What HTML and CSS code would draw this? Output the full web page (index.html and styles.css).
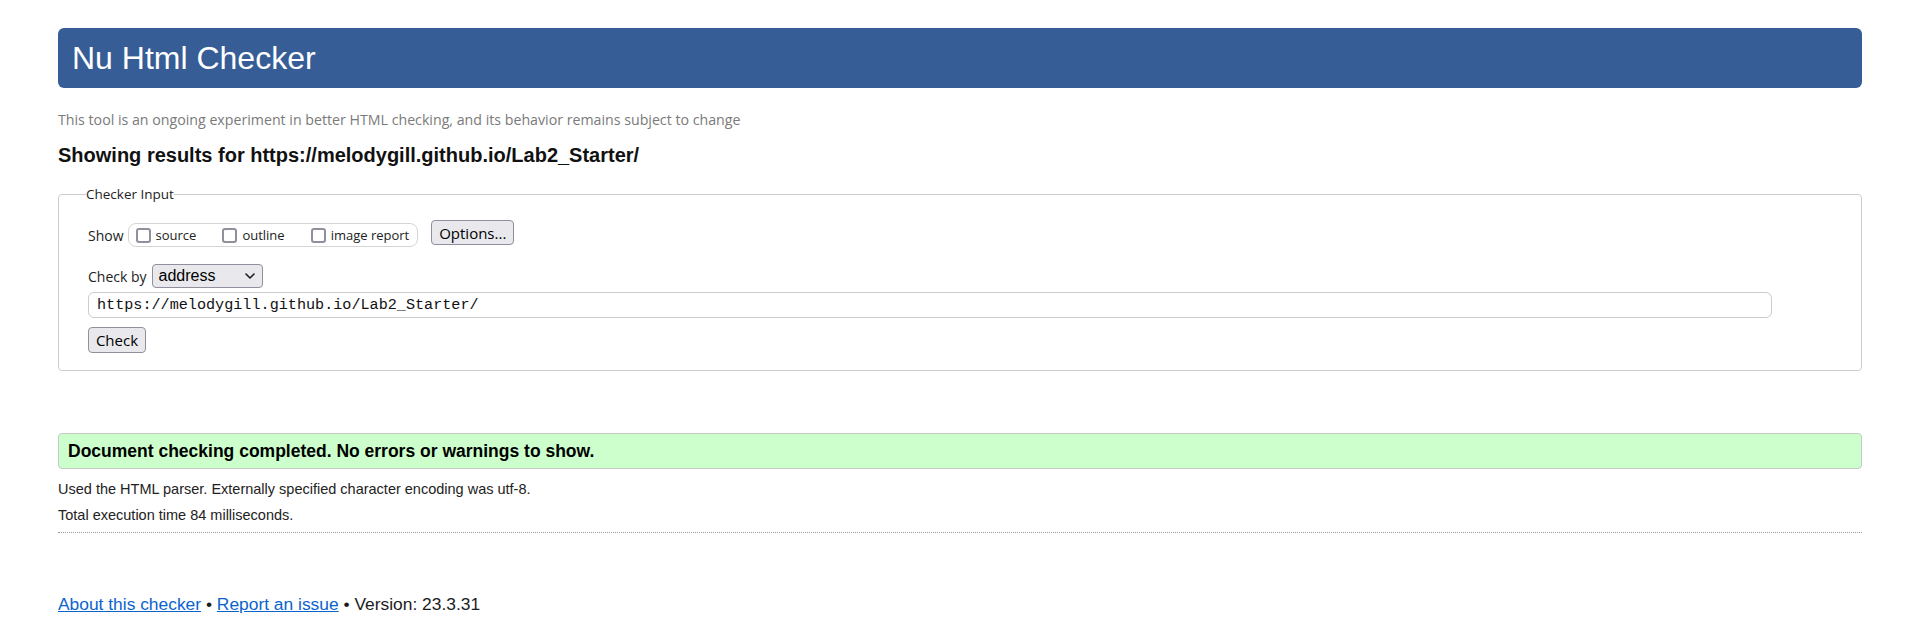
FILE: index.html
```html
<!DOCTYPE html>
<html lang="en">
<head>
<meta charset="utf-8">
<title>Showing results for https://melodygill.github.io/Lab2_Starter/ - Nu Html Checker</title>
<link rel="stylesheet" href="styles.css">
</head>
<body>
<h1 class="banner">Nu Html Checker</h1>
<p class="tagline">This tool is an ongoing experiment in better HTML checking, and its behavior remains subject to change</p>
<h2 class="results-title">Showing results for https://melodygill.github.io/Lab2_Starter/</h2>
<form class="checker-form">
  <fieldset class="checker-input">
    <legend class="checker-legend">Checker Input</legend>
    <div class="show-row">
      <span class="label">Show</span>
      <span class="show-group">
        <label class="opt"><input type="checkbox" class="box"><span>source</span></label>
        <label class="opt"><input type="checkbox" class="box"><span>outline</span></label>
        <label class="opt"><input type="checkbox" class="box"><span>image report</span></label>
      </span>
      <button type="button" class="btn btn-options">Options...</button>
    </div>
    <div class="checkby-row">
      <span class="label">Check by</span>
      <span class="select">
        <span class="select-text">address</span>
        <svg class="chev" width="10" height="6" viewBox="0 0 10 6"><path d="M1 1 L5 5 L9 1" fill="none" stroke="#1c1b22" stroke-width="1.6" stroke-linecap="round" stroke-linejoin="round"/></svg>
      </span>
    </div>
    <div class="url-input">https://melodygill.github.io/Lab2_Starter/</div>
    <div class="check-row"><button type="button" class="btn btn-check">Check</button></div>
  </fieldset>
</form>
<p class="success">Document checking completed. No errors or warnings to show.</p>
<p class="details">Used the HTML parser. Externally specified character encoding was utf-8.</p>
<p class="details details-time">Total execution time 84 milliseconds.</p>
<hr class="sep">
<p class="footer"><a href="#">About this checker</a> • <a href="#">Report an issue</a> • Version: 23.3.31</p>
</body>
</html>
```
FILE: styles.css
```css
html, body {
  margin: 0;
  background: #fff;
}
body {
  padding: 0 58px;
  font-family: "Liberation Sans", Arial, sans-serif;
  color: #1c1c1c;
}
.banner {
  margin: 28px 0 0;
  height: 60px;
  line-height: 60px;
  padding-left: 14px;
  background: #365d95;
  color: #fff;
  font-size: 32px;
  font-weight: normal;
  border-radius: 6px;
}
.tagline {
  margin: 23px 0 0;
  font-family: "Open Sans", sans-serif;
  font-size: 14.2px;
  line-height: 18px;
  color: #7a7a7a;
}
.results-title {
  margin: 14px 0 0;
  font-size: 20px;
  line-height: 24px;
  font-weight: bold;
  color: #111;
}
.checker-form {
  margin: 18px 0 0;
}
.checker-input {
  margin: 0;
  border: 1px solid #cccccc;
  border-radius: 4px;
  padding: 17px 29px 17px 29px;
  min-width: 0;
}
.checker-legend {
  font-family: "Open Sans", sans-serif;
  font-size: 13.5px;
  line-height: 18px;
  padding: 0;
  margin-left: -2px;
  color: #222;
}
.label {
  font-family: "Open Sans", sans-serif;
  font-size: 14px;
  color: #222;
}
.show-row {
  display: flex;
  height: 27px;
}
.show-row > .label {
  align-self: center;
  margin-top: 3px;
}
.show-group {
  box-sizing: border-box;
  display: flex;
  align-items: center;
  align-self: flex-end;
  height: 24px;
  margin-left: 4px;
  padding: 0 8px 0 7px;
  border: 1px solid #d4d4d4;
  border-radius: 8px;
}
.opt {
  display: flex;
  align-items: center;
  font-family: "Open Sans", sans-serif;
  font-size: 13px;
  color: #222;
  margin-right: 26px;
}
.opt:last-child {
  margin-right: 0;
}
.box {
  box-sizing: border-box;
  appearance: none;
  -webkit-appearance: none;
  width: 15px;
  height: 15px;
  margin: 0 5px 0 0;
  border: 2px solid #8f8f9d;
  border-radius: 3px;
  background: #fff;
}
.btn {
  box-sizing: border-box;
  background: #e9e9ed;
  border: 1px solid #8f8f9d;
  border-radius: 4px;
  color: #000;
  font-family: "Open Sans", sans-serif;
  padding: 0;
  text-align: center;
}
.btn-options {
  align-self: flex-start;
  margin-left: 13px;
  height: 25px;
  width: 83px;
  font-size: 15px;
}
.checkby-row {
  display: flex;
  align-items: center;
  margin-top: 17px;
  height: 24px;
}
.select {
  box-sizing: border-box;
  display: flex;
  align-items: center;
  justify-content: space-between;
  width: 111px;
  height: 24px;
  margin-left: 5px;
  padding: 0 7px 0 6px;
  background: #e9e9ed;
  border: 1px solid #8f8f9d;
  border-radius: 4px;
  font-family: "Liberation Sans", Arial, sans-serif;
  font-size: 16px;
  color: #000;
}
.url-input {
  box-sizing: border-box;
  margin-top: 4px;
  width: calc(100% - 60px);
  height: 26px;
  line-height: 24px;
  padding-left: 8px;
  border: 1px solid #cccccc;
  border-radius: 6px;
  font-family: "Liberation Mono", monospace;
  font-size: 15.15px;
  color: #111;
}
.check-row {
  margin-top: 9px;
  display: flex;
}
.btn-check {
  height: 26px;
  width: 58px;
  font-size: 15px;
}
.success {
  box-sizing: border-box;
  margin: 62px 0 0;
  height: 36px;
  line-height: 34px;
  padding-left: 9px;
  background: #ccffcc;
  border: 1px solid #c8c8c8;
  border-radius: 4px;
  font-weight: bold;
  font-size: 17.5px;
  color: #000;
}
.details {
  margin: 11px 0 0;
  font-size: 14.5px;
  line-height: 18px;
  color: #222;
}
.details-time {
  margin-top: 8px;
}
.sep {
  margin: 8px 0 0;
  border: 0;
  border-top: 1px dotted #9a9a9a;
  height: 0;
}
.footer {
  margin: 62px 0 0;
  font-size: 17.4px;
  line-height: 18px;
  color: #1c1c1c;
}
.footer a {
  color: #0b63ce;
  text-decoration: underline;
}
```
